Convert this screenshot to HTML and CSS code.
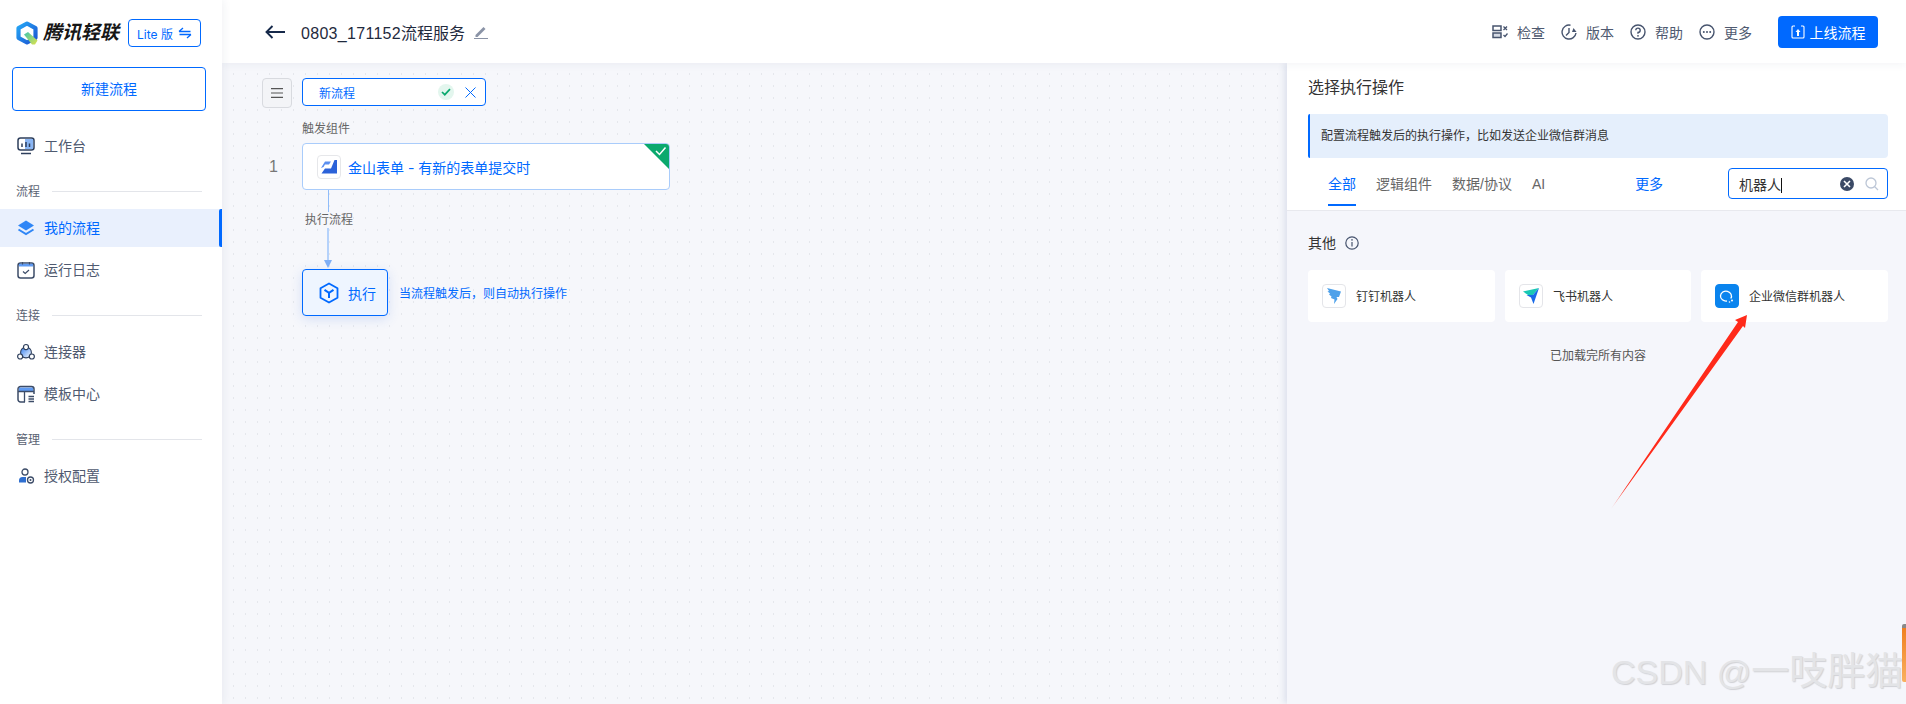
FILE: index.html
```html
<!DOCTYPE html>
<html lang="zh-CN">
<head>
<meta charset="utf-8">
<title>腾讯轻联</title>
<link rel="stylesheet" href="styles.css">
</head>
<body>
<div class="app">
  <aside class="sidebar">
    <div class="brand">
      <svg class="logo" width="22" height="24" viewBox="0 0 22 24"><defs><linearGradient id="lg1" x1="0" y1="0" x2="1" y2="1"><stop offset="0" stop-color="#25a6f5"/><stop offset="1" stop-color="#1b55d2"/></linearGradient><linearGradient id="lg2" x1="0" y1="0" x2="1" y2="1"><stop offset="0" stop-color="#3fc6b0"/><stop offset="1" stop-color="#dfe24a"/></linearGradient></defs><path d="M11 2.500 19.500 7.200V16.800L11 21.500 2.500 16.800V7.200Z" fill="none" stroke="url(#lg1)" stroke-width="4.200" stroke-linejoin="round"/><path d="M8 13.500 12 11 21.500 19.500 19 23.500H16Z" fill="url(#lg2)"/></svg>
      <span class="brand-name">腾讯轻联</span>
      <button class="lite">Lite 版<svg width="14" height="12" viewBox="0 0 14 12"><path d="M1 4.500H12.500M1 4.500 5 1M13 7.500H1.500M13 7.500 9 11" fill="none" stroke="#0069ff" stroke-width="1.300"/></svg></button>
    </div>
    <button class="new-flow">新建流程</button>
    <nav class="nav">
      <a class="nav-item">
        <svg width="18" height="18" viewBox="0 0 18 18"><rect x="1" y="1" width="16" height="12" rx="2.500" fill="#fff" stroke="#2e3f5c" stroke-width="1.500"/><rect x="8" y="2" width="8" height="10" fill="#8ab6f5"/><path d="M5 6.500v3.500M9 5v5M12.500 6.500v3.500" stroke="#2e3f5c" stroke-width="1.500"/><path d="M4 16.500H14" stroke="#2e3f5c" stroke-width="1.500"/></svg>
        <span>工作台</span>
      </a>
      <div class="nav-group"><span>流程</span><i></i></div>
      <a class="nav-item active">
        <svg width="18" height="18" viewBox="0 0 18 18"><path d="M9 1.500 17 6.500 9 11.500 1 6.500Z" fill="#2f86f6"/><path d="M1.500 10.500 9 15 16.500 10.500" fill="none" stroke="#2f86f6" stroke-width="2"/></svg>
        <span>我的流程</span>
      </a>
      <a class="nav-item">
        <svg width="18" height="18" viewBox="0 0 18 18"><rect x="1" y="2" width="16" height="15" rx="2.500" fill="#fff" stroke="#3c4c68" stroke-width="1.500"/><path d="M2 2.800H16V5.500H2Z" fill="#5f9bf3"/><path d="M5.500 1v2.500M12.500 1v2.500" stroke="#3c4c68" stroke-width="1.200"/><path d="M6 10.500 8.200 12.500 12 9" fill="none" stroke="#3c4c68" stroke-width="1.200"/></svg>
        <span>运行日志</span>
      </a>
      <div class="nav-group"><span>连接</span><i></i></div>
      <a class="nav-item">
        <svg width="20" height="18" viewBox="0 0 20 18"><defs><linearGradient id="cg" x1="0" y1="0" x2="1" y2="1"><stop offset="0" stop-color="#2f7cf0"/><stop offset="1" stop-color="#fff"/></linearGradient></defs><circle cx="10" cy="9.500" r="6" fill="url(#cg)" stroke="#2e3f5c" stroke-width="1.200"/><circle cx="10" cy="3.500" r="2.800" fill="#fff" stroke="#2e3f5c" stroke-width="1.300"/><circle cx="3.500" cy="14" r="2.800" fill="#fff" stroke="#2e3f5c" stroke-width="1.300"/><circle cx="16.500" cy="14" r="2.800" fill="#fff" stroke="#2e3f5c" stroke-width="1.300"/></svg>
        <span>连接器</span>
      </a>
      <a class="nav-item">
        <svg width="18" height="18" viewBox="0 0 18 18"><path d="M2 2.500H16V6H2Z" fill="#5f9bf3"/><path d="M17 9V4a2.500 2.500 0 0 0-2.500-2.500h-11A2.500 2.500 0 0 0 1 4v10.500A2.500 2.500 0 0 0 3.500 17H8" fill="none" stroke="#3c4c68" stroke-width="1.500"/><path d="M1 6.500H17M7.500 6.500V17M11.500 11.500H17M11.500 14H17M11.500 16.500H17" fill="none" stroke="#3c4c68" stroke-width="1.300"/></svg>
        <span>模板中心</span>
      </a>
      <div class="nav-group"><span>管理</span><i></i></div>
      <a class="nav-item">
        <svg width="18" height="18" viewBox="0 0 18 18"><circle cx="8" cy="5" r="3" fill="none" stroke="#3c4c68" stroke-width="1.300"/><path d="M2 15.500V13.500A3.500 3.500 0 0 1 5.500 10H9V15.500Z" fill="#2f6fd0"/><circle cx="13.500" cy="13" r="3" fill="#fff" stroke="#3c4c68" stroke-width="1.300"/><circle cx="13.500" cy="13" r="1" fill="#3c4c68"/></svg>
        <span>授权配置</span>
      </a>
    </nav>
  </aside>

  <main class="main">
    <header class="topbar">
      <svg class="back" width="20" height="14" viewBox="0 0 20 14"><path d="M20 7H2M7.500 1 1.500 7 7.500 13" fill="none" stroke="#16294a" stroke-width="1.900"/></svg>
      <h1 class="flow-name"><span class="flow-id">0803_171152</span>流程服务</h1>
      <svg class="edit" width="14" height="14" viewBox="0 0 14 14"><path d="M1.500 10 9.500 2 11.500 4 3.500 12H1.500Z" fill="#8a93a6"/><path d="M0 13.500H14" stroke="#8a93a6"/></svg>
      <div class="tools">
        <a class="tool">
          <svg width="16" height="14" viewBox="0 0 16 14"><rect x="1" y="1" width="8" height="4.500" fill="none" stroke="#47546e" stroke-width="1.500"/><rect x="1" y="8" width="8" height="4.500" fill="#d5dae4" stroke="#47546e" stroke-width="1.500"/><path d="M11.500 1.500 15 5M15 1.500 11.500 5M11.500 10 13 11.500 15.500 8.500" fill="none" stroke="#47546e" stroke-width="1.300"/></svg>
          <span>检查</span>
        </a>
        <a class="tool">
          <svg width="16" height="16" viewBox="0 0 16 16"><path d="M9.500 1.200A7 7 0 1 0 15 9" fill="none" stroke="#47546e" stroke-width="1.400"/><path d="M8 4V8.500L5 11.500" fill="none" stroke="#47546e" stroke-width="1.400"/><path d="M12.500 4 15.500 8H11Z" fill="#47546e"/></svg>
          <span>版本</span>
        </a>
        <a class="tool">
          <svg width="16" height="16" viewBox="0 0 16 16"><circle cx="8" cy="8" r="7" fill="none" stroke="#47546e" stroke-width="1.400"/><path d="M5.800 6.200A2.200 2.200 0 1 1 8 8.500V9.800" fill="none" stroke="#47546e" stroke-width="1.400"/><circle cx="8" cy="11.800" r=".9" fill="#47546e"/></svg>
          <span>帮助</span>
        </a>
        <a class="tool">
          <svg width="16" height="16" viewBox="0 0 16 16"><circle cx="8" cy="8" r="7" fill="none" stroke="#47546e" stroke-width="1.400"/><circle cx="4.800" cy="8" r="1" fill="#47546e"/><circle cx="8" cy="8" r="1" fill="#47546e"/><circle cx="11.200" cy="8" r="1" fill="#47546e"/></svg>
          <span>更多</span>
        </a>
      </div>
      <button class="publish">
        <svg width="14" height="14" viewBox="0 0 14 14"><path d="M4 1H2a1 1 0 0 0-1 1v10a1 1 0 0 0 1 1h10a1 1 0 0 0 1-1V2a1 1 0 0 0-1-1h-2" fill="none" stroke="#fff" stroke-width="1.100"/><path d="M7 4 9.500 7H8V11H6V7H4.500Z" fill="#fff"/></svg>
        上线流程
      </button>
    </header>

    <div class="workspace">
      <section class="canvas">
        <div class="name-row">
          <button class="menu-btn"><svg width="12" height="10" viewBox="0 0 12 10"><path d="M0 .7H12M0 5H12M0 9.300H12" stroke="#555" stroke-width="1.200"/></svg></button>
          <div class="name-input">
            <span class="name-text">新流程</span>
            <span class="ok"><svg width="10" height="8" viewBox="0 0 10 8"><path d="M1 4 3.800 6.700 9 1.200" fill="none" stroke="#0aa96e" stroke-width="1.700"/></svg></span>
            <svg class="close" width="11" height="11" viewBox="0 0 11 11"><path d="M.5.500 10.500 10.500M10.500.500.500 10.500" stroke="#0069ff"/></svg>
          </div>
        </div>
        <div class="stage">
          <div class="stage-label">触发组件</div>
          <div class="trigger-row">
            <span class="step-no">1</span>
            <div class="trigger-card">
              <span class="card-icon">
                <svg width="16" height="14" viewBox="0 0 16 14"><path d="M0 8 4 1.500H10L8 4.500H4L2.500 7Z" fill="#5b8ff0"/><path d="M13.500 0H16V13.500H0.500L4 8.500H10Z" fill="#2b62d9"/></svg>
              </span>
              <span class="trigger-text">金山表单 - 有新的表单提交时</span>
              <svg class="corner" width="25" height="25" viewBox="0 0 25 25"><path d="M0 0H25V25Z" fill="#0aa96e"/><path d="M12 7 15.500 10.500 21.500 3.500" fill="none" stroke="#fff" stroke-width="1.500"/></svg>
            </div>
          </div>
          <div class="connector">
            <i class="line-top"></i>
            <span class="conn-label">执行流程</span>
            <i class="line-bottom"></i>
            <i class="arrow-head"></i>
          </div>
          <div class="exec-row">
            <div class="exec-box">
              <svg width="20" height="22" viewBox="0 0 20 22"><path d="M10 1.500 18.500 6.300V15.700L10 20.500 1.500 15.700V6.300Z" fill="none" stroke="#0069ff" stroke-width="1.800" stroke-linejoin="round"/><path d="M5.500 7.800 10 10.800 14.500 7.800M10 10.800V16" fill="none" stroke="#0069ff" stroke-width="2"/></svg>
              <span>执行</span>
            </div>
            <span class="exec-desc">当流程触发后，则自动执行操作</span>
          </div>
        </div>
      </section>

      <section class="panel">
        <div class="panel-head">
          <h2 class="panel-title">选择执行操作</h2>
          <div class="notice">配置流程触发后的执行操作，比如发送企业微信群消息</div>
          <div class="tabs">
            <a class="tab current">全部</a>
            <a class="tab">逻辑组件</a>
            <a class="tab">数据/协议</a>
            <a class="tab">AI</a>
            <a class="tab-more">更多</a>
            <div class="search">
              <span class="search-text">机器人</span>
              <span class="clear"><svg width="8" height="8" viewBox="0 0 8 8"><path d="M1 1 7 7M7 1 1 7" stroke="#fff" stroke-width="1.600"/></svg></span>
              <svg width="14" height="14" viewBox="0 0 14 14"><circle cx="6" cy="6" r="5" fill="none" stroke="#bcc6d6" stroke-width="1.300"/><path d="M9.500 9.500 13 13" stroke="#bcc6d6" stroke-width="1.300"/></svg>
            </div>
          </div>
        </div>
        <div class="panel-body">
          <div class="section-title">其他
            <svg width="14" height="14" viewBox="0 0 14 14"><circle cx="7" cy="7" r="6.200" fill="none" stroke="#47546e" stroke-width="1.200"/><path d="M7 6V10.500" stroke="#47546e" stroke-width="1.200"/><circle cx="7" cy="3.900" r=".8" fill="#47546e"/></svg>
          </div>
          <div class="robots">
            <div class="robot">
              <span class="robot-icon">
                <svg width="16" height="18" viewBox="0 0 16 18"><path d="M1 1 15 4.500 13 10 10.500 10 11.500 12 8 17 8.500 12.500 5 11 5.500 9.500 3 7.500 4 6.500 1.500 4.500 3 4Z" fill="#4ea1ea"/></svg>
              </span>
              <span class="robot-name">钉钉机器人</span>
            </div>
            <div class="robot">
              <span class="robot-icon">
                <svg width="18" height="18" viewBox="0 0 18 18"><path d="M1 4.500 17 1 11 8 6 8Z" fill="#19c8b4"/><path d="M17 1 11.500 17 9 10.500 4.500 8 11 8Z" fill="#1769e8"/></svg>
              </span>
              <span class="robot-name">飞书机器人</span>
            </div>
            <div class="robot">
              <span class="robot-icon wecom">
                <svg width="16" height="15" viewBox="0 0 16 15"><path d="M11.800 9.500A5.500 5 0 1 0 8 12" fill="none" stroke="#fff" stroke-width="1.300"/><circle cx="13" cy="11.500" r="1" fill="#fff"/><circle cx="10.500" cy="13" r=".8" fill="#fff"/></svg>
              </span>
              <span class="robot-name">企业微信群机器人</span>
            </div>
          </div>
          <p class="loaded">已加载完所有内容</p>
        </div>
      </section>
    </div>
  </main>
</div>

<svg class="annot-arrow" width="150" height="205" viewBox="0 0 150 205"><defs><linearGradient id="ag" x1="0" y1="1" x2="1" y2="0"><stop offset="0" stop-color="#ff2a1a" stop-opacity=".3"/><stop offset=".1" stop-color="#ff2a1a"/></linearGradient></defs><path d="M7 203 134 16 131 14 143 9 141 22 139 20Z" fill="url(#ag)"/></svg>
<div class="watermark">CSDN @<span class="watermark-cjk">一吱胖猫</span></div>
<div class="orange-tab"></div>
</body>
</html>
```
FILE: styles.css
```css
* { box-sizing: border-box; }
html, body { margin: 0; height: 100%; overflow: hidden; }
body {
  font-family: "Inter", "Noto Sans CJK SC", sans-serif;
  font-size: 14px;
  color: #333;
  background: #fff;
}
button { font: inherit; cursor: pointer; }
h1, h2, p { margin: 0; font-weight: 400; }
.app { display: flex; height: 704px; }

/* sidebar */
.sidebar {
  width: 222px;
  flex: none;
  background: #fff;
  box-shadow: 2px 0 8px rgba(30, 50, 90, .06);
  position: relative;
  z-index: 3;
  padding-top: 19px;
}
.brand { display: flex; align-items: center; height: 28px; padding-left: 16px; }
.logo { flex: none; }
.brand-name {
  margin-left: 5px;
  width: 85px;
  font-size: 19px;
  line-height: 28px;
  font-weight: 700;
  font-style: italic;
  color: #161616;
  white-space: nowrap;
}
.lite {
  width: 73px;
  height: 28px;
  border: 1px solid #0069ff;
  border-radius: 4px;
  background: #fff;
  color: #0069ff;
  font-size: 12px;
  padding: 0;
  display: flex;
  align-items: center;
  justify-content: center;
  gap: 5px;
}
.new-flow {
  display: block;
  margin: 20px 0 0 12px;
  width: 194px;
  height: 44px;
  border: 1px solid #0069ff;
  border-radius: 4px;
  background: #fff;
  color: #0069ff;
  font-size: 14px;
  padding: 0 0 2px;
}
.nav { margin-top: 16px; display: flex; flex-direction: column; }
.nav-item {
  display: flex;
  align-items: center;
  gap: 9px;
  height: 38px;
  padding-left: 17px;
  color: #4f5a70;
  position: relative;
}
.nav-item span { padding-bottom: 2px; }
.nav-item + .nav-item { margin-top: 4px; }
.nav-item svg { flex: none; width: 18px; }
.nav-item.active { background: #e9f0fd; color: #0069ff; }
.nav-item.active::after {
  content: "";
  position: absolute;
  right: 0;
  top: 0;
  bottom: 0;
  width: 3px;
  background: #0069ff;
  border-radius: 2px 0 0 2px;
}
.nav-group {
  display: flex;
  align-items: center;
  gap: 12px;
  height: 20px;
  margin: 16px 20px 8px 16px;
  font-size: 12px;
  color: #5a6272;
}
.nav-group span { padding-bottom: 2px; }
.nav-group i { flex: 1; height: 1px; background: #e3e5ea; }

/* main */
.main { flex: 1; min-width: 0; display: flex; flex-direction: column; }
.topbar {
  height: 63px;
  flex: none;
  display: flex;
  align-items: center;
  padding: 0 28px 0 43px;
  background: #fff;
  box-shadow: 0 2px 8px rgba(30, 50, 90, .05);
  position: relative;
  z-index: 2;
}
.back { flex: none; }
.flow-name { margin-left: 16px; font-size: 16px; color: #1f2a3d; white-space: nowrap; }
.flow-id { font-family: "Liberation Sans", sans-serif; letter-spacing: .3px; }
.edit { margin-left: 9px; flex: none; }
.tools { margin-left: auto; display: flex; align-items: center; gap: 16px; }
.tool { display: flex; align-items: center; gap: 9px; color: #4f5a70; font-size: 14px; }
.tool svg { width: 16px; flex: none; }
.publish {
  margin-left: 26px;
  width: 100px;
  height: 32px;
  border: 0;
  border-radius: 4px;
  background: #0069ff;
  color: #fff;
  font-size: 14px;
  display: flex;
  align-items: center;
  justify-content: center;
  gap: 5px;
  padding: 0;
}
.workspace { flex: 1; display: flex; min-height: 0; }

/* canvas */
.canvas {
  flex: 1;
  min-width: 0;
  padding: 15px 0 0 40px;
  background-color: #f6f7fb;
  background-image: radial-gradient(circle at 12px 11px, #e5e7ec 1px, transparent 1.3px);
  background-size: 12px 12px;
}
.name-row { display: flex; gap: 10px; align-items: flex-start; }
.menu-btn {
  width: 30px;
  height: 30px;
  padding: 0;
  border: 1px solid #d8dadf;
  border-radius: 4px;
  background: #f3f4f7;
  display: flex;
  align-items: center;
  justify-content: center;
}
.name-input {
  width: 184px;
  height: 28px;
  border: 1px solid #0069ff;
  border-radius: 4px;
  background: #fff;
  display: flex;
  align-items: center;
  padding: 0 9px 0 16px;
  color: #0069ff;
  font-size: 12px;
}
.name-text { flex: 1; }
.ok {
  width: 16px;
  height: 16px;
  border-radius: 50%;
  background: #e3f6ee;
  display: flex;
  align-items: center;
  justify-content: center;
}
.close { margin-left: 11px; }
.stage-label {
  margin: 13px 0 6px 40px;
  height: 16px;
  line-height: 16px;
  font-size: 12px;
  color: #666;
}
.trigger-row { display: flex; align-items: center; }
.step-no { width: 40px; padding-left: 7px; font-size: 16px; color: #777; font-family: "Liberation Sans", sans-serif; }
.trigger-card {
  width: 368px;
  height: 47px;
  border: 1px solid #a9ccfb;
  border-radius: 4px;
  background: #fff;
  display: flex;
  align-items: center;
  padding-left: 14px;
  position: relative;
  overflow: hidden;
}
.card-icon {
  width: 24px;
  height: 24px;
  border: 1px solid #e6e7ea;
  border-radius: 4px;
  display: flex;
  align-items: center;
  justify-content: center;
  flex: none;
}
.trigger-text { margin-left: 7px; color: #0069ff; font-size: 14px; }
.corner { position: absolute; right: 0; top: 0; }
.connector { margin-left: 40px; display: flex; flex-direction: column; align-items: flex-start; }
.line-top { margin-left: 26px; width: 1px; height: 22px; background: #8fbcfa; }
.conn-label { margin-left: 3px; height: 16px; line-height: 16px; font-size: 12px; color: #666; }
.line-bottom { margin: 0 0 0 25px; width: 2px; height: 32px; background: #b5d2fb; }
.arrow-head {
  margin-left: 22px;
  width: 0;
  height: 0;
  border-left: 4px solid transparent;
  border-right: 4px solid transparent;
  border-top: 8px solid #7fb0f7;
}
.exec-row { margin: 1px 0 0 40px; display: flex; align-items: center; gap: 11px; }
.exec-box {
  width: 86px;
  height: 47px;
  border: 1px solid #0069ff;
  border-radius: 4px;
  background: #eef5ff;
  box-shadow: 0 3px 12px rgba(60, 110, 220, .18);
  display: flex;
  align-items: center;
  padding-left: 16px;
  gap: 9px;
  color: #0069ff;
}
.exec-desc { font-size: 12px; color: #0069ff; }

/* panel */
.panel {
  width: 619px;
  flex: none;
  display: flex;
  flex-direction: column;
  background: #f5f6fb;
  box-shadow: -3px 0 6px rgba(60, 80, 140, .12);
  position: relative;
}
.panel-head {
  background: #fff;
  height: 148px;
  padding: 12px 18px 0 21px;
  border-bottom: 1px solid #e8e9ee;
}
.panel-title { font-size: 16px; line-height: 24px; color: #333; }
.notice {
  margin-top: 15px;
  height: 44px;
  line-height: 43px;
  padding-left: 11px;
  background: #e5effc;
  border-left: 2px solid #0069ff;
  border-radius: 2px 4px 4px 2px;
  font-size: 12px;
  color: #333;
}
.tabs {
  position: relative;
  display: flex;
  align-items: flex-start;
  height: 52px;
  padding-left: 20px;
  font-family: "Liberation Sans", "Noto Sans CJK SC", sans-serif;
}
.tab { padding-top: 16px; height: 48px; line-height: 20px; color: #666; margin-right: 20px; white-space: nowrap; }
.tab.current { color: #0069ff; border-bottom: 2px solid #0069ff; }
.tab-more { margin-left: 70px; padding-top: 16px; line-height: 20px; color: #0069ff; }
.search {
  position: absolute;
  right: 0;
  top: 10px;
  width: 160px;
  height: 31px;
  border: 1px solid #0069ff;
  border-radius: 4px;
  background: #fff;
  display: flex;
  align-items: center;
  padding: 0 8px 0 10px;
}
.search-text { flex: 1; }
.search-text::after { content: ""; display: inline-block; width: 1px; height: 15px; background: #111; vertical-align: -3px; }
.clear {
  width: 14px;
  height: 14px;
  margin-right: 11px;
  border-radius: 50%;
  background: #3b4a66;
  display: flex;
  align-items: center;
  justify-content: center;
}
.panel-body { flex: 1; padding: 22px 18px 0 21px; }
.section-title { display: flex; align-items: center; gap: 9px; height: 20px; font-size: 14px; line-height: 20px; }
.robots { margin-top: 17px; display: grid; grid-template-columns: 187px 186px 187px; gap: 10px; }
.robot {
  height: 52px;
  background: #fff;
  border-radius: 4px;
  display: flex;
  align-items: center;
  padding-left: 14px;
  gap: 10px;
  font-size: 12px;
  color: #333;
}
.robot-name { padding-bottom: 2px; }
.robot-icon {
  width: 24px;
  height: 24px;
  border: 1px solid #e4e5e9;
  border-radius: 4px;
  display: flex;
  align-items: center;
  justify-content: center;
  flex: none;
}
.robot-icon.wecom { background: #0a84ee; border-color: #0a84ee; }
.loaded { margin-top: 26px; text-align: center; font-size: 12px; line-height: 16px; color: #555; }

/* overlays */
.annot-arrow { position: absolute; left: 1604px; top: 306px; z-index: 5; }
.watermark {
  position: absolute;
  left: 1611px;
  top: 648px;
  font-family: "Liberation Sans", "Noto Sans CJK SC", sans-serif;
  font-size: 34px;
  line-height: 46px;
  color: #e3e4e7;
  text-shadow: 1px 1px 1px #d0d1d5;
  white-space: nowrap;
  z-index: 5;
}
.watermark-cjk { font-size: 38px; }
.orange-tab {
  position: absolute;
  right: 0;
  top: 624px;
  width: 4px;
  height: 58px;
  border-radius: 2px 0 0 2px;
  background: linear-gradient(#8a8a8a 0 4px, #f08020 4px, #f9b060);
  z-index: 6;
}
```
